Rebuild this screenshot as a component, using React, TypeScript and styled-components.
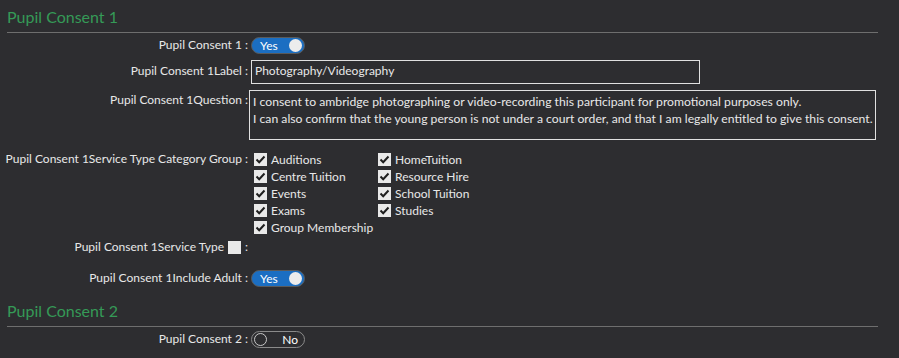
import React from "react";
import styled, { createGlobalStyle } from "styled-components";

const Global = createGlobalStyle`
  html, body { margin: 0; padding: 0; background: #2d2d30; }
  body { font-family: "Segoe UI", Lato, "Noto Sans", sans-serif; font-size: 12px; color: #e8e8e8; }
`;

const Page = styled.div`
  width: 871px;
  padding: 0 0 0 7px;
  background: #2d2d30;
  min-height: 358px;
`;

const SectionHeader = styled.div<{ $mt?: number }>`
  color: #359a57;
  font-size: 16px;
  line-height: 20px;
  margin-top: ${(p) => p.$mt ?? 0}px;
  padding: 7px 0 5px 0;
  border-bottom: 1px solid #6e6e6e;
`;

const Row = styled.div<{ $mt?: number }>`
  display: grid;
  grid-template-columns: 241px 1fr;
  column-gap: 3px;
  margin-top: ${(p) => p.$mt ?? 4}px;
  align-items: start;
`;

const Label = styled.div<{ $pt?: number }>`
  text-align: right;
  line-height: 16px;
  padding-top: ${(p) => p.$pt ?? 0}px;
  white-space: nowrap;
  display: flex;
  justify-content: flex-end;
  align-items: center;
  gap: 4px;
`;

const Toggle = styled.div<{ $on: boolean }>`
  width: 54px;
  height: 17px;
  box-sizing: border-box;
  border-radius: 9px;
  border: 1px solid ${(p) => (p.$on ? "#5a5a5a" : "#8a8a8a")};
  background: ${(p) => (p.$on ? "#1b6ec2" : "transparent")};
  display: flex;
  align-items: center;
  flex-direction: ${(p) => (p.$on ? "row" : "row-reverse")};
  justify-content: space-between;
  padding-left: ${(p) => (p.$on ? "8px" : "2px")};
  padding-right: ${(p) => (p.$on ? "2px" : "6px")};
  color: #fff;
  font-size: 12px;
  line-height: 15px;
`;

const Knob = styled.span<{ $on: boolean }>`
  width: 13px;
  height: 13px;
  box-sizing: border-box;
  border-radius: 50%;
  background: ${(p) => (p.$on ? "#ececec" : "transparent")};
  border: ${(p) => (p.$on ? "none" : "1px solid #c8c8c8")};
`;

const TextBox = styled.div`
  width: 449px;
  height: 24px;
  box-sizing: border-box;
  border: 1px solid #e0e0e0;
  padding: 2px 3px;
  line-height: 16px;
  font-size: 12px;
`;

const TextArea = styled.div`
  width: 627px;
  height: 50px;
  box-sizing: border-box;
  border: 1px solid #e0e0e0;
  padding: 2px 3px;
  line-height: 17px;
  font-size: 12.2px;
  margin-left: -2px;
  white-space: pre;
`;

const CheckGrid = styled.div`
  display: grid;
  grid-template-columns: 124px 1fr;
  grid-auto-flow: column;
  grid-template-rows: repeat(5, 17px);
  padding-left: 3px;
`;

const CheckItem = styled.div`
  display: flex;
  align-items: center;
  gap: 4px;
  line-height: 17px;
`;

const Box = styled.span`
  width: 13px;
  height: 13px;
  background: #e9e9e9;
  display: inline-flex;
  align-items: center;
  justify-content: center;
`;

const SmallBox = styled.span`
  width: 13px;
  height: 13px;
  background: #e9e9e9;
  display: inline-block;
`;

const Check = () => (
  <Box>
    <svg width="11" height="11" viewBox="0 0 11 11">
      <path d="M1.5 5.5 L4.2 8.2 L9.5 2.5" stroke="#1e1e1e" strokeWidth="2" fill="none" />
    </svg>
  </Box>
);

const TogglePart = ({ on }: { on: boolean }) => (
  <Toggle $on={on}>
    <span>{on ? "Yes" : "No"}</span>
    <Knob $on={on} />
  </Toggle>
);

const items = [
  "Auditions",
  "Centre Tuition",
  "Events",
  "Exams",
  "Group Membership",
  "HomeTuition",
  "Resource Hire",
  "School Tuition",
  "Studies",
];

export default function App() {
  return (
    <Page>
      <Global />
      <SectionHeader>Pupil Consent 1</SectionHeader>
      <Row $mt={4}>
        <Label>Pupil Consent 1 :</Label>
        <TogglePart on />
      </Row>
      <Row $mt={6}>
        <Label $pt={3}>Pupil Consent 1Label :</Label>
        <TextBox>Photography/Videography</TextBox>
      </Row>
      <Row $mt={6}>
        <Label $pt={2}>Pupil Consent 1Question :</Label>
        <TextArea>
          {"I consent to ambridge photographing or video-recording this participant for promotional purposes only.\nI can also confirm that the young person is not under a court order, and that I am legally entitled to give this consent."}
        </TextArea>
      </Row>
      <Row $mt={11}>
        <Label>Pupil Consent 1Service Type Category Group :</Label>
        <CheckGrid>
          {items.map((t) => (
            <CheckItem key={t}>
              <Check />
              <span>{t}</span>
            </CheckItem>
          ))}
        </CheckGrid>
      </Row>
      <Row $mt={3}>
        <Label>
          Pupil Consent 1Service Type <SmallBox /> :
        </Label>
        <span />
      </Row>
      <Row $mt={15}>
        <Label>Pupil Consent 1Include Adult :</Label>
        <TogglePart on />
      </Row>
      <SectionHeader $mt={7}>Pupil Consent 2</SectionHeader>
      <Row $mt={4}>
        <Label>Pupil Consent 2 :</Label>
        <TogglePart on={false} />
      </Row>
    </Page>
  );
}
